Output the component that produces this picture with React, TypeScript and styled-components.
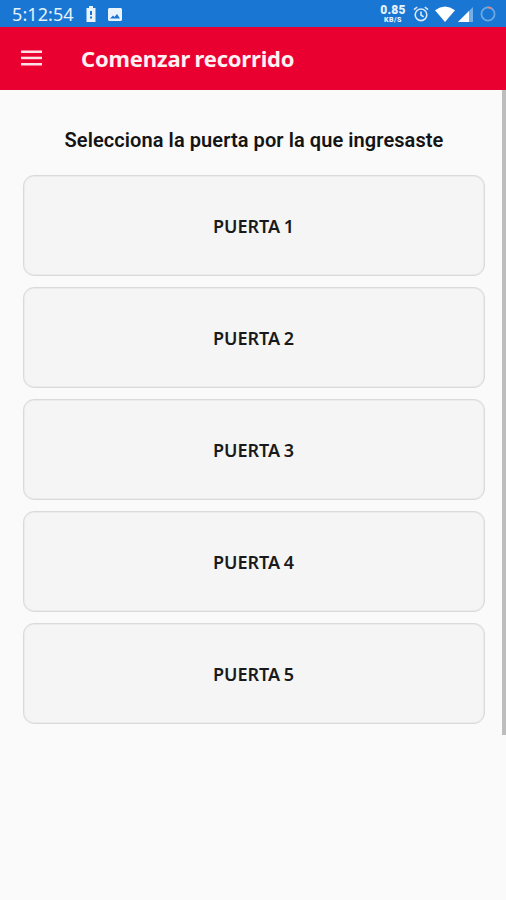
import React from "react";
import styled, { createGlobalStyle } from "styled-components";

const GlobalStyle = createGlobalStyle`
  * { box-sizing: border-box; }
  body { margin: 0; background: #fafafa; }
`;

const Screen = styled.div`
  display: flex;
  flex-direction: column;
  width: 506px;
  height: 900px;
  overflow: hidden;
  background: #fafafa;
`;

const StatusBar = styled.header`
  display: flex;
  align-items: center;
  justify-content: space-between;
  flex: none;
  height: 27px;
  padding: 1px 10px 0 12px;
  background: #1976d2;
  color: #e6f2fc;
`;

const StatusGroup = styled.div`
  display: flex;
  align-items: center;
`;

const Clock = styled.time`
  width: 73px;
  font: 400 18px/26px "Noto Sans", sans-serif;
  letter-spacing: 0.08px;
  white-space: nowrap;
`;

const StatusIcon = styled.svg<{ $gap: number }>`
  display: block;
  flex: none;
  margin-left: ${(p) => p.$gap}px;
`;

const NetworkSpeed = styled.div`
  display: flex;
  flex-direction: column;
  align-items: center;
  width: 26px;
  font-family: Roboto, sans-serif;
  font-weight: 900;
  white-space: nowrap;
`;

const SpeedValue = styled.span`
  font-size: 12px;
  line-height: 12px;
  letter-spacing: 0.3px;
`;

const SpeedUnit = styled.span`
  font-size: 7px;
  line-height: 8px;
  letter-spacing: 0.5px;
`;

const AppBar = styled.nav`
  display: flex;
  align-items: center;
  flex: none;
  height: 62.5px;
  padding-left: 21px;
  background: #ea0030;
`;

const MenuButton = styled.button`
  display: flex;
  width: 60px;
  padding: 0;
  border: 0;
  background: none;
`;

const Title = styled.h1`
  margin: 0 0 1px;
  color: #fff0f3;
  font: 700 22px/30px "Noto Sans", sans-serif;
  letter-spacing: -0.2px;
  word-spacing: -1px;
  white-space: nowrap;
`;

const Body = styled.div`
  display: flex;
  flex: 1;
`;

const Content = styled.main`
  flex: 1;
  padding: 38.5px 17px 0 23px;
`;

const Prompt = styled.h2`
  margin: 0 0 23px;
  color: #141414;
  font: 600 20px/24px Roboto, sans-serif;
  letter-spacing: 0.08px;
  text-align: center;
  white-space: nowrap;
`;

const DoorList = styled.div`
  display: flex;
  flex-direction: column;
  gap: 11px;
`;

const DoorButton = styled.button`
  width: 462px;
  height: 101px;
  padding: 0 1px 0 0;
  border: 1px solid #dadada;
  border-radius: 11px;
  background: #f5f5f5;
  box-shadow: inset 0 0 0 1px #ebebeb;
  color: #1a1a1a;
  font: 600 18px/24px "Noto Sans", sans-serif;
  letter-spacing: -0.05px;
  word-spacing: -1px;
`;

const ScrollThumb = styled.div`
  width: 4px;
  height: 645px;
  background: #bdbdbd;
`;

const doors = [1, 2, 3, 4, 5];

export default function App() {
  return (
    <Screen>
      <GlobalStyle />
      <StatusBar>
        <StatusGroup>
          <Clock>5:12:54</Clock>
          <StatusIcon $gap={1} width="10" height="16" viewBox="0 0 10 16">
            <path fill="#eaf4fd" fillRule="evenodd" d="M3 0h4v2h2.5v14h-9V2H3zM4 5v4h2V5zm0 5.5v2h2v-2z" />
          </StatusIcon>
          <StatusIcon $gap={12} width="14" height="13" viewBox="0 0 14 13">
            <path fill="#eaf4fd" fillRule="evenodd" d="M1 0h12l1 1v11l-1 1H1l-1-1V1zM2 10.5h10L9 6 6.5 9 5 7.5z" />
          </StatusIcon>
        </StatusGroup>
        <StatusGroup>
          <NetworkSpeed>
            <SpeedValue>0.85</SpeedValue>
            <SpeedUnit>KB/S</SpeedUnit>
          </NetworkSpeed>
          <StatusIcon $gap={7} width="16" height="16" viewBox="0 0 16 16" fill="none" stroke="#d9ebfa" strokeWidth="1.6">
            <circle cx="8" cy="8.8" r="5.8" />
            <path d="M1 3.6 4.2 1M15 3.6 11.8 1M8 5.4V9l2.6 1.8" />
          </StatusIcon>
          <StatusIcon $gap={6} width="20" height="16" viewBox="0 0 20 16">
            <path fill="#fff" d="M0 4.2Q10-3 20 4.2L10 16z" />
          </StatusIcon>
          <StatusIcon $gap={3} width="15" height="15" viewBox="0 0 15 15">
            <path fill="#73afe8" d="M15 0v15H0z" />
            <path fill="#fff" d="M11 4v11H0z" />
          </StatusIcon>
          <StatusIcon $gap={7} width="16" height="16" viewBox="0 0 16 16" fill="none" strokeWidth="1.8">
            <circle cx="8" cy="8" r="6.6" stroke="#6aa9e4" />
            <path d="M7.5 1.4Q10 1.3 12 2.8" stroke="#d98a86" />
          </StatusIcon>
        </StatusGroup>
      </StatusBar>
      <AppBar>
        <MenuButton aria-label="Menú">
          <svg width="22" height="16" viewBox="0 0 22 16" fill="#ffdfe5">
            <rect y="0.5" width="21" height="2.5" />
            <rect y="6.7" width="21" height="2.5" />
            <rect y="13" width="21" height="2.5" />
          </svg>
        </MenuButton>
        <Title>Comenzar recorrido</Title>
      </AppBar>
      <Body>
        <Content>
          <Prompt>Selecciona la puerta por la que ingresaste</Prompt>
          <DoorList>
            {doors.map((n) => (
              <DoorButton key={n}>PUERTA {n}</DoorButton>
            ))}
          </DoorList>
        </Content>
        <ScrollThumb />
      </Body>
    </Screen>
  );
}
